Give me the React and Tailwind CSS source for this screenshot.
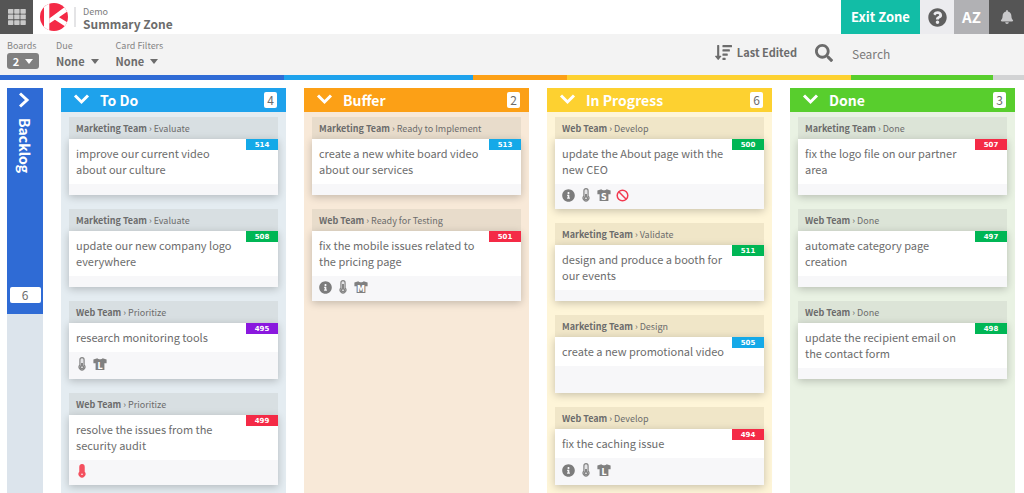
import React from "react";
import { FaInfoCircle, FaQuestionCircle, FaSearch, FaBell, FaSortAmountDown } from "react-icons/fa";

const BADGE = {
  blue: "bg-[#14a9e8]",
  green: "bg-[#00b655]",
  red: "bg-[#f42a46]",
  purple: "bg-[#8a18de]",
};

const COLUMNS = [
  {
    title: "To Do",
    head: "bg-[#1ea2ec]",
    body: "bg-[#e4ecf1]",
    label: "bg-[#d8dfe2]",
    cards: [
      { team: "Marketing Team", lane: "Evaluate", id: 514, color: "blue", text: "improve our current video about our culture" },
      { team: "Marketing Team", lane: "Evaluate", id: 508, color: "green", text: "update our new company logo everywhere" },
      { team: "Web Team", lane: "Prioritize", id: 495, color: "purple", text: "research monitoring tools", icons: ["low", "L"] },
      { team: "Web Team", lane: "Prioritize", id: 499, color: "red", text: "resolve the issues from the security audit", icons: ["hot"] },
    ],
  },
  {
    title: "Buffer",
    head: "bg-[#fca016]",
    body: "bg-[#f8e9d8]",
    label: "bg-[#e8dccb]",
    cards: [
      { team: "Marketing Team", lane: "Ready to Implement", id: 513, color: "blue", text: "create a new white board video about our services" },
      { team: "Web Team", lane: "Ready for Testing", id: 501, color: "red", text: "fix the mobile issues related to the pricing page", icons: ["info", "mid", "M"] },
    ],
  },
  {
    title: "In Progress",
    head: "bg-[#fdd130]",
    body: "bg-[#fef5d8]",
    label: "bg-[#f0e6c8]",
    cards: [
      { team: "Web Team", lane: "Develop", id: 500, color: "green", text: "update the About page with the new CEO", icons: ["info", "low", "S", "blocked"] },
      { team: "Marketing Team", lane: "Validate", id: 511, color: "green", text: "design and produce a booth for our events" },
      { team: "Marketing Team", lane: "Design", id: 505, color: "blue", text: "create a new promotional video" },
      { team: "Web Team", lane: "Develop", id: 494, color: "red", text: "fix the caching issue", icons: ["info", "low", "L"] },
    ],
    count: 6,
  },
  {
    title: "Done",
    head: "bg-[#58ce2d]",
    body: "bg-[#e9f2e3]",
    label: "bg-[#dce4d7]",
    cards: [
      { team: "Marketing Team", lane: "Done", id: 507, color: "red", text: "fix the logo file on our partner area" },
      { team: "Web Team", lane: "Done", id: 497, color: "green", text: "automate category page creation" },
      { team: "Web Team", lane: "Done", id: 498, color: "green", text: "update the recipient email on the contact form" },
    ],
  },
];

function Thermometer({ level }) {
  const hot = level === "hot";
  const color = hot ? "#f4505f" : "#868686";
  const top = { low: 5, mid: 3, hot: 1 }[level];
  return (
    <svg width="8" height="14" viewBox="0 0 8 14" aria-hidden="true">
      <path d="M1.9 8V2.7a2.1 2.1 0 0 1 4.2 0V8a2.9 2.9 0 1 1-4.2 0Z" fill={hot ? color : "#e4e4e6"} stroke={color} strokeWidth="1.2" />
      <path d={`M4 ${top + 1}V10`} stroke={color} strokeWidth="2" />
      <circle cx="4" cy="10.3" r="2.4" fill={color} />
      <circle cx="4" cy="10.3" r="0.8" fill="#ffffff" />
    </svg>
  );
}

function Shirt({ size }) {
  return (
    <svg width="14" height="14" viewBox="0 0 14 14" role="img" aria-label={`Size ${size}`}>
      <path d="M4.4 1.2C5.2 2.6 8.8 2.6 9.6 1.2L13.6 2.4V6.2H11.4V13H2.6V6.2H0.4V2.4Z" fill="#808080" />
      <text x="7" y="12" textAnchor="middle" fontSize="8" fontWeight="700" fill="#ffffff" fontFamily="'DejaVu Sans', sans-serif">
        {size}
      </text>
    </svg>
  );
}

function CardIcon({ name }) {
  if (name === "info") return <FaInfoCircle size={13} color="#7c7c7c" />;
  if (name === "blocked")
    return (
      <svg width="13" height="13" viewBox="0 0 13 13" aria-label="Blocked">
        <circle cx="6.5" cy="6.5" r="5.3" fill="none" stroke="#f23a50" strokeWidth="1.5" />
        <path d="M2.8 2.8L10.2 10.2" stroke="#f23a50" strokeWidth="1.5" />
      </svg>
    );
  if (name.length === 1) return <Shirt size={name} />;
  return <Thermometer level={name} />;
}

function Card({ card, label }) {
  return (
    <article>
      <h3 className={`h-[22px] px-[7px] text-[9px] leading-6 whitespace-nowrap ${label}`}>
        <b>{card.team}</b> › {card.lane}
      </h3>
      <div className="relative flex min-h-14 flex-col bg-white shadow-[0_2px_8px_rgba(0,0,0,0.22)]">
        <span
          className={`absolute top-0 right-0 h-[11px] w-8 text-center font-['DejaVu_Sans'] text-[7px] leading-3 font-bold text-white ${BADGE[card.color]}`}
        >
          {card.id}
        </span>
        <p className="pt-[6px] pr-9 pb-[7px] pl-[7px] text-[11px] leading-4">{card.text}</p>
        <div className="flex min-h-[11px] flex-1 items-center bg-[#f7f7f9] pb-[3px] pl-1">
          {card.icons?.map((name) => (
            <span key={name} className="flex h-[22px] w-[18px] items-center justify-center">
              <CardIcon name={name} />
            </span>
          ))}
        </div>
      </div>
    </article>
  );
}

function Column({ column }) {
  return (
    <section className={`flex min-w-0 flex-1 flex-col ${column.body}`}>
      <header className={`flex h-6 items-center pr-[9px] pl-3 ${column.head}`}>
        <button type="button" aria-label={`Collapse ${column.title}`} className="flex w-[27px] items-center">
          <svg width="18" height="12" viewBox="0 0 18 12" fill="none" stroke="#fff" strokeWidth="3">
            <path d="M2 1.5L8.5 8L15 1.5" />
          </svg>
        </button>
        <h2 className="flex-1 text-[14px] leading-6 font-bold text-white">{column.title}</h2>
        <span className="h-4 w-[13px] rounded-[2px] bg-white text-center text-[12px] leading-4">
          {column.count ?? column.cards.length}
        </span>
      </header>
      <div className="flex flex-col gap-[14px] px-2 pt-[5px] pb-2">
        {column.cards.map((card) => (
          <Card key={card.id} card={card} label={column.label} />
        ))}
      </div>
    </section>
  );
}

function Caret() {
  return (
    <svg width="8" height="5" viewBox="0 0 8 5" fill="currentColor">
      <path d="M0 0H8L4 5Z" />
    </svg>
  );
}

function Filter({ id, label, children }) {
  return (
    <div>
      <div id={id} className="h-[15px] text-[9px] leading-[15px] text-[#858585]">{label}</div>
      {children}
    </div>
  );
}

function TopBar() {
  return (
    <header className="flex h-[34px] items-stretch bg-white">
      <button type="button" aria-label="Apps" className="flex w-[33px] items-center justify-center bg-[#555]">
        <svg width="18" height="16" viewBox="0 0 18 16" fill="#c9c9c9">
          {[0, 5.6, 11.2].map((y) =>
            [0, 6.2, 12.4].map((x) => <rect key={`${x}-${y}`} x={x} y={y} width="5.4" height="4.7" rx="0.6" />)
          )}
        </svg>
      </button>
      <a href="#home" aria-label="Home" className="flex items-center pr-[6px] pl-[7px]">
        <svg width="28" height="28" viewBox="0 0 28 28">
          <defs>
            <clipPath id="disc">
              <circle cx="14" cy="14" r="14" />
            </clipPath>
          </defs>
          <g clipPath="url(#disc)">
            <rect width="28" height="28" fill="#f42a46" />
            <path d="M4 0H9.3V28H4Z" fill="#fff" />
            <path d="M9.3 15.5L25.5 3.5L28.5 7.6L19 14.2L28 19.8V25.2L14.9 16.7L9.3 20.4Z" fill="#fff" />
          </g>
        </svg>
      </a>
      <div className="my-[7px] border-l-2 border-[#e4e4e6]" />
      <div className="flex-1 pt-[5px] pl-[7px]">
        <div className="text-[9px] leading-[13px] text-[#7c7c7c]">Demo</div>
        <h1 className="text-[12px] leading-3 font-bold">Summary Zone</h1>
      </div>
      <button type="button" className="w-[79px] bg-[#12bda6] text-[13px] font-bold text-white">
        Exit Zone
      </button>
      <button type="button" aria-label="Help" className="flex w-[34px] items-center justify-center bg-[#ececef]">
        <FaQuestionCircle size={19} color="#606060" />
      </button>
      <button type="button" className="w-[35px] bg-[#b1b1b4] text-[15px] font-bold text-white">
        AZ
      </button>
      <button type="button" aria-label="Notifications" className="flex w-[35px] items-center justify-center bg-[#555]">
        <FaBell size={14} color="#c9c9cb" />
      </button>
    </header>
  );
}

function Toolbar() {
  return (
    <div className="flex h-[41px] justify-between bg-[#f3f3f3]">
      <div className="flex gap-[17px] pt-1 pl-[7px]">
        <Filter id="boards" label="Boards">
          <button type="button" aria-describedby="boards" className="flex h-4 w-8 items-center justify-center gap-[6px] rounded-[3px] bg-[#808080] text-[11px] leading-4 font-bold text-white">
            2 <Caret />
          </button>
        </Filter>
        <Filter id="due" label="Due">
          <button type="button" aria-describedby="due" className="flex h-4 items-center gap-[6px] text-[11px] leading-4 font-bold">
            None <Caret />
          </button>
        </Filter>
        <Filter id="filters" label="Card Filters">
          <button type="button" aria-describedby="filters" className="flex h-4 items-center gap-[6px] text-[11px] leading-4 font-bold">
            None <Caret />
          </button>
        </Filter>
      </div>
      <div className="flex items-center pb-1">
        <button type="button" className="flex items-center gap-[5px] text-[11px] font-bold">
          <FaSortAmountDown size={17} />
          Last Edited
        </button>
        <label htmlFor="search" className="pr-[19px] pl-[18px]">
          <FaSearch size={18} aria-label="Search" />
        </label>
        <input id="search" type="search" placeholder="Search" className="w-[172px] bg-transparent pt-[2px] text-[12px] leading-5 outline-none placeholder:text-[#7a7a7a]" />
      </div>
    </div>
  );
}

export default function App() {
  return (
    <div className="flex min-h-screen flex-col bg-white font-['Noto_Sans_CJK_SC',sans-serif] text-[#6c6c6c]">
      <TopBar />
      <Toolbar />
      <div className="flex h-[5px]">
        <div className="flex-[6] bg-[#2f6bd5]" />
        <div className="flex-[4] bg-[#1ea2ec]" />
        <div className="flex-[2] bg-[#fca016]" />
        <div className="flex-[6] bg-[#fdd130]" />
        <div className="flex-[3] bg-[#58ce2d]" />
        <div className="w-[31px] bg-[#d2d3d4]" />
      </div>
      <main className="flex flex-1 gap-[18px] pt-2 pr-[9px] pl-[7px]">
        <section className="w-9 bg-[#dce4ec]">
          <div className="flex h-[226px] flex-col items-center bg-[#2f6bd5] pt-1 pb-[11px]">
            <button type="button" aria-label="Expand Backlog" className="flex">
              <svg width="12" height="16" viewBox="0 0 12 16" fill="none" stroke="#fff" strokeWidth="3">
                <path d="M1 1.5L8 8L1 14.5" />
              </svg>
            </button>
            <h2 className="mt-[10px] flex-1 text-[14px] leading-4 font-bold text-white [writing-mode:vertical-rl]">Backlog</h2>
            <span className="h-4 w-[31px] rounded-[2px] bg-white text-center text-[12px] leading-4">6</span>
          </div>
        </section>
        {COLUMNS.map((column) => (
          <Column key={column.title} column={column} />
        ))}
      </main>
    </div>
  );
}
